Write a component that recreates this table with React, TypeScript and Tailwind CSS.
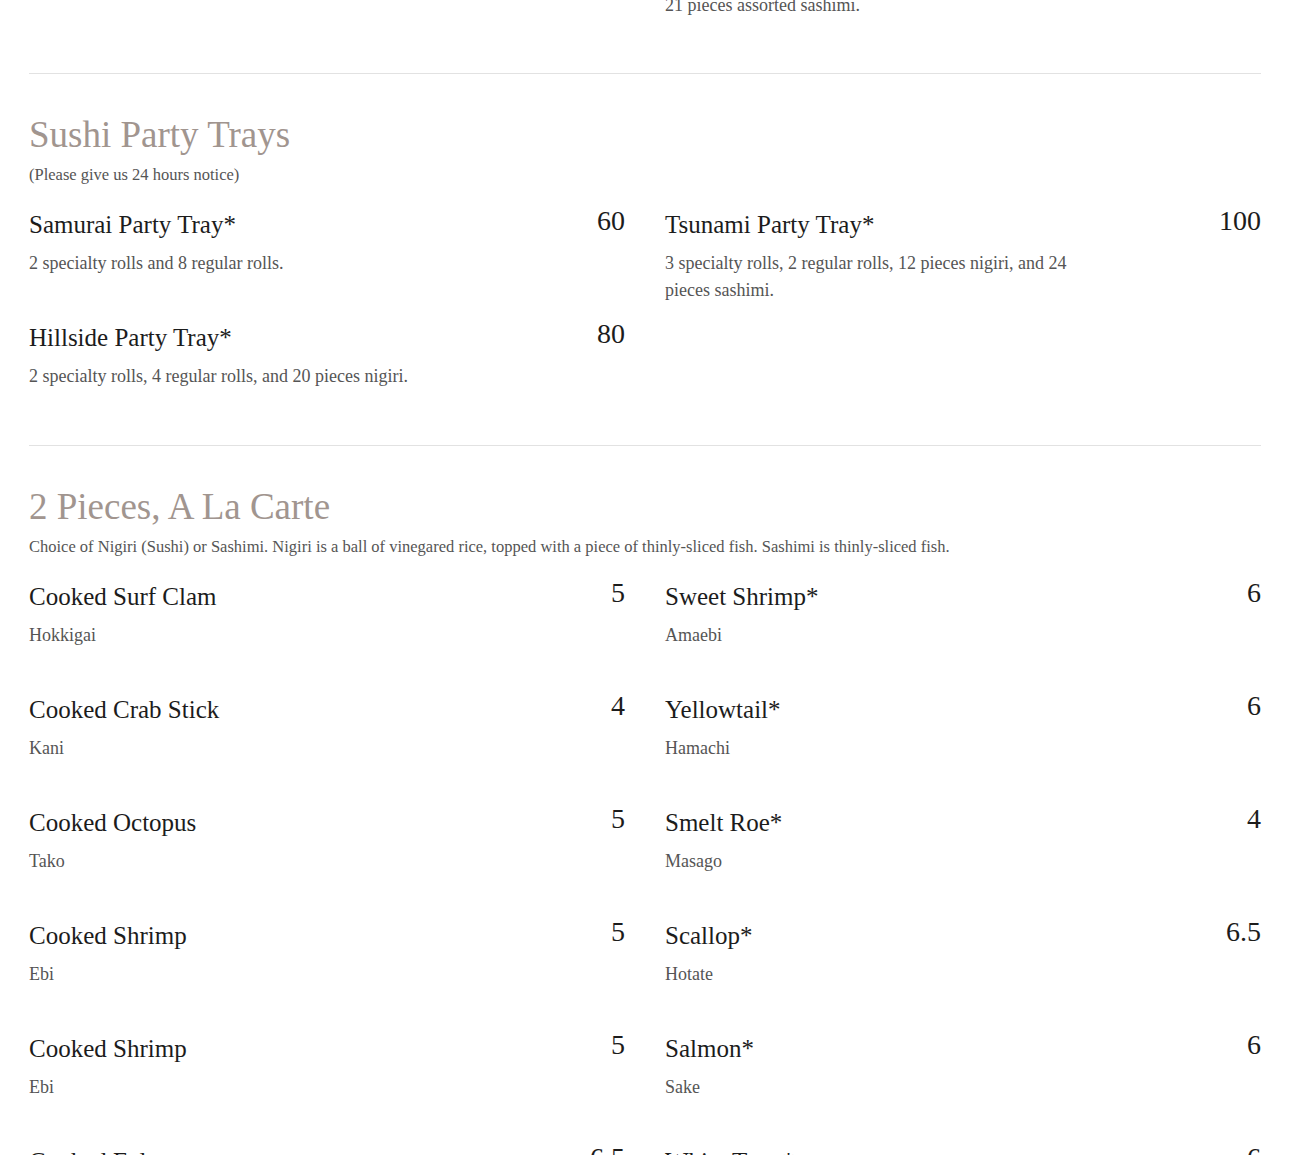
type Item = { name: string; price: string; desc: string };

const trayLeft: Item[] = [
  { name: "Samurai Party Tray*", price: "60", desc: "2 specialty rolls and 8 regular rolls." },
  { name: "Hillside Party Tray*", price: "80", desc: "2 specialty rolls, 4 regular rolls, and 20 pieces nigiri." },
];

const trayRight: Item[] = [
  {
    name: "Tsunami Party Tray*",
    price: "100",
    desc: "3 specialty rolls, 2 regular rolls, 12 pieces nigiri, and 24 pieces sashimi.",
  },
];

const pieceLeft: Item[] = [
  { name: "Cooked Surf Clam", price: "5", desc: "Hokkigai" },
  { name: "Cooked Crab Stick", price: "4", desc: "Kani" },
  { name: "Cooked Octopus", price: "5", desc: "Tako" },
  { name: "Cooked Shrimp", price: "5", desc: "Ebi" },
  { name: "Cooked Shrimp", price: "5", desc: "Ebi" },
  { name: "Cooked Eel", price: "6.5", desc: "Unagi" },
];

const pieceRight: Item[] = [
  { name: "Sweet Shrimp*", price: "6", desc: "Amaebi" },
  { name: "Yellowtail*", price: "6", desc: "Hamachi" },
  { name: "Smelt Roe*", price: "4", desc: "Masago" },
  { name: "Scallop*", price: "6.5", desc: "Hotate" },
  { name: "Salmon*", price: "6", desc: "Sake" },
  { name: "White Tuna*", price: "6", desc: "Escolar" },
];

const MenuItem = ({ item }: { item: Item }) => (
  <div className="mb-[45px]">
    <div className="flex items-start justify-between">
      <h3 className="text-[25px] leading-[32px] text-[#1c1c1c]">{item.name}</h3>
      <span className="text-[28px] leading-[24px] text-[#1c1c1c]">{item.price}</span>
    </div>
    <p className="mt-[9px] max-w-[420px] text-[18px] leading-[27px] text-[#555]">{item.desc}</p>
  </div>
);

const Column = ({ items }: { items: Item[] }) => (
  <div className="flex flex-col">
    {items.map((item, i) => (
      <MenuItem key={i} item={item} />
    ))}
  </div>
);

const Section = ({
  title,
  note,
  left,
  right,
}: {
  title: string;
  note: string;
  left: Item[];
  right: Item[];
}) => (
  <section className="border-t border-[#e2e2e2] pt-[38px] pb-[10px]">
    <h2 className="text-[37px] leading-[46px] text-[#a1958f]">{title}</h2>
    <p className="mt-[5px] text-[16.5px] leading-[24px] text-[#555]">{note}</p>
    <div className="mt-[22px] grid grid-cols-2 gap-x-10">
      <Column items={left} />
      <Column items={right} />
    </div>
  </section>
);

export default function App() {
  return (
    <div className="h-[1155px] overflow-hidden bg-white font-['Liberation_Serif',serif]">
      <div className="mx-[29px] -mt-[8px]">
        <div className="grid grid-cols-2 gap-x-10 pb-[54px]">
          <div />
          <p className="text-[18px] leading-[27px] text-[#555]">21 pieces assorted sashimi.</p>
        </div>
        <Section
          title="Sushi Party Trays"
          note="(Please give us 24 hours notice)"
          left={trayLeft}
          right={trayRight}
        />
        <Section
          title="2 Pieces, A La Carte"
          note="Choice of Nigiri (Sushi) or Sashimi. Nigiri is a ball of vinegared rice, topped with a piece of thinly-sliced fish. Sashimi is thinly-sliced fish."
          left={pieceLeft}
          right={pieceRight}
        />
      </div>
    </div>
  );
}
